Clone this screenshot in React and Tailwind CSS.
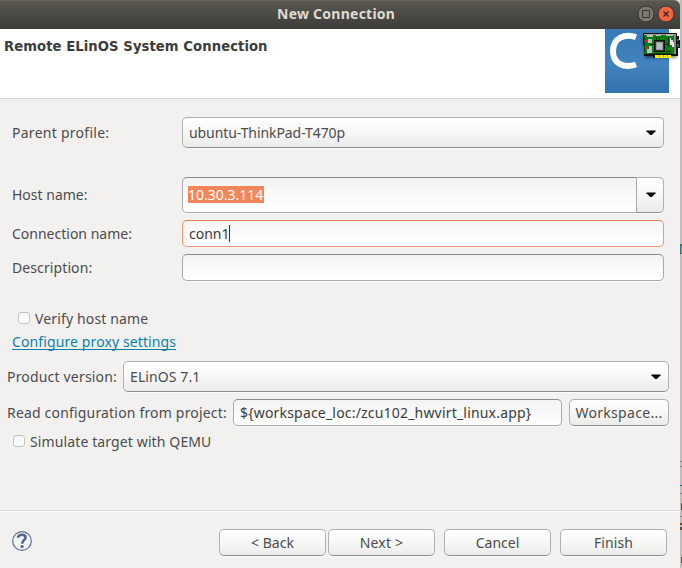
import React from "react";

const raised =
  "rounded-[5px] border border-[#b0b0ae] border-b-[#8f8f8d] bg-linear-to-b from-[#ffffff] via-[#f7f7f7] to-[#ebebea] shadow-[0_1px_0_#fafafa]";
const field =
  "rounded-[5px] border border-[#a9a9a7] border-t-[#8c8c8a] bg-linear-to-b from-[#f3f3f3] to-[#ffffff] shadow-[0_1px_0_#fafafa]";

function Label({ children, className = "" }) {
  return <span className={"block shrink-0 whitespace-pre " + className}>{children}</span>;
}

function Arrow() {
  return (
    <svg width="10" height="6" viewBox="0 0 10 6" className="shrink-0">
      <path d="M.500 .500h9v.8L5.800 5H4.200L.500 1.300z" fill="#000" />
    </svg>
  );
}

function Check() {
  return <span className="h-3 w-3 shrink-0 rounded-[3px] border border-[#c4c4c2] bg-linear-to-b from-[#f6f6f6] to-white" />;
}

function Button({ children, className, text = "" }) {
  return (
    <button className={"flex h-[27px] shrink-0 items-center justify-center " + raised + " " + className}>
      <Label className={text}>{children}</Label>
    </button>
  );
}

function Banner() {
  return (
    <svg width="76" height="64" viewBox="0 0 76 64" className="shrink-0">
      <defs>
        <linearGradient id="blue" x1="0" y1="0" x2="0" y2="1">
          <stop offset="0" stopColor="#3679b6" />
          <stop offset="0.55" stopColor="#4283bd" />
          <stop offset="1" stopColor="#3272af" />
        </linearGradient>
        <filter id="soft" x="-20%" y="-20%" width="140%" height="140%">
          <feGaussianBlur stdDeviation="1.500" />
        </filter>
      </defs>
      <rect width="64" height="64" fill="url(#blue)" />
      <path d="M31 8.300C20 4 8 9 8 22C8 35 19 39.500 31 35.500" fill="none" stroke="#fff" strokeWidth="6" />
      <path d="M38 8h34v21H40z" fill="#000" opacity="0.45" filter="url(#soft)" />
      <g shapeRendering="crispEdges">
        <path d="M38 4h34v3h2v4h1v8h-2v8h-7v2H48v-2h-9z" fill="#141414" />
        <path d="M39 5h32v1H39z" fill="#a7aaa7" />
        <path d="M39 6h30v19H39z" fill="#0b7d16" />
        <path d="M42 6h6v2h-6zM51 6h5v1h-5zM61 6h7v1h-7z" fill="#b9bdb9" />
        <path d="M39 7h1v17h-1zM44 24h23v1H44z" fill="#054a0b" />
        <path d="M40 11h3v2h-3zM40 18h3v2h-3z" fill="#f21c1c" />
        <path d="M43 10h4v4h-4zM42 20h5v4h-5zM44 17h3v3h-3z" fill="#c0c0c0" />
        <path d="M45 15h4v1h-4zM60 15h3v1h-3zM54 8h1v4h-1zM51 8h1v3h-1zM63 8h1v10h-1zM61 22h5v1h-5z" fill="#043b09" />
        <path d="M49 11h11v12H49z" fill="#111" />
        <path d="M50 12h9v10h-9z" fill="#333" />
        <path d="M51 13h7v8h-7z" fill="#9a9a9a" />
        <path d="M52 14h5v6h-5z" fill="#bdbdbd" />
        <path d="M65 9h1v2h2v2h1v5h-2v-2h-2z" fill="#e4e4e4" />
        <path d="M69 6h2v19h-2z" fill="#858585" />
        <path d="M72 10h2v2h-2zM72 15h2v3h-2z" fill="#555" />
        <path d="M50 26h16v3H50z" fill="#f2e916" />
        <path d="M54 26h1v2h-1zM58 26h1v2h-1zM62 26h1v2h-1z" fill="#b3aa17" />
      </g>
    </svg>
  );
}

function TitleBar() {
  return (
    <header className="flex h-[29px] w-[680px] shrink-0 items-center rounded-tr-[6px] border-t border-[#66645a] bg-linear-to-b from-[#595750] to-[#3d3c38] pr-[5px]">
      <Label className="-mt-[2px] ml-[277px] grow text-[14px] font-bold tracking-[0.25px] text-[#dfdbd2]">New Connection</Label>
      <svg width="38" height="18" viewBox="0 0 38 18" className="-mt-[3px]">
        <circle cx="9" cy="9" r="8" fill="#7b7970" stroke="#35342f" />
        <rect x="5.500" y="5.500" width="7" height="7" fill="none" stroke="#35342f" />
        <circle cx="29" cy="9" r="8" fill="#ee6540" stroke="#35342f" />
        <path d="M26.500 6.500l5 5m0-5l-5 5" stroke="#3b251c" strokeWidth="1.300" />
      </svg>
    </header>
  );
}

// Sliver of the window behind the dialog, visible past its right edge.
function BackgroundSliver() {
  return (
    <svg width="2" height="568" viewBox="0 0 2 568" className="shrink-0" shapeRendering="crispEdges">
      <path d="M0 0h2v568H0z" fill="#bdbdbb" />
      <path d="M0 461h2v1H0zM0 466h2v1H0zM0 493h2v1H0zM0 516h2v1H0z" fill="#858583" />
      <path d="M0 244h2v10H0z" fill="#376d6d" />
      <path d="M1 246h1v7h-1z" fill="#55b3df" />
      <path d="M0 485h2v1H0z" fill="#1c62ad" />
      <path d="M1 503h1v7h-1zM0 523h2v2H0zM0 527h2v3H0zM1 557h1v6h-1z" fill="#6f4a2c" />
    </svg>
  );
}

export default function App() {
  return (
    <div className="flex h-[568px] w-[682px] overflow-hidden bg-[#b9b9b7] font-['Noto_Sans',sans-serif] text-[14px] leading-[20px] text-[#4c4c4c]">
      <div className="flex w-[680px] shrink-0 flex-col bg-[#f2f1f0]">
        <div className="bg-[#dededc]">
          <TitleBar />
        </div>
        <section className="flex h-[70px] shrink-0 items-start border-b border-[#d9d8d6] bg-white">
          <Label className="ml-1 mt-[7px] w-[601px] font-['DejaVu_Sans_Condensed','DejaVu_Sans',sans-serif] text-[14.67px] font-bold tracking-[0.07px] text-[#3c3c3c] [font-stretch:condensed]">
            Remote ELinOS System Connection
          </Label>
          <Banner />
        </section>
        <main className="flex flex-col">
          <div className="mt-[18px] flex h-[31px] items-center pl-3">
            <Label className="w-[170px] tracking-[0.27px]">Parent profile:</Label>
            <div className={"flex h-[31px] w-[482px] items-center justify-between pl-1.5 pr-[7px] " + raised}>
              <Label className="tracking-[-0.08px]">ubuntu-ThinkPad-T470p</Label>
              <Arrow />
            </div>
          </div>
          <div className="mt-[29px] flex h-9 items-center pl-3">
            <Label className="w-[170px]">Host name:</Label>
            <div className={"flex h-9 w-[455px] items-center rounded-r-none! pl-[5px] " + field}>
              <Label className="-mt-px h-[17px] w-[76px] bg-[#f28559] leading-[17px] text-white">10.30.3.114</Label>
            </div>
            <div className={"flex h-9 w-[27px] items-center justify-center rounded-l-none! border-l-0! pl-0.5 " + raised}>
              <Arrow />
            </div>
          </div>
          <div className="mt-[7px] flex h-[27px] items-center pl-3">
            <Label className="w-[170px]">Connection name:</Label>
            <div className="flex h-[27px] w-[482px] items-center rounded-[5px] border border-[#ef9674] border-t-[#dd7c57] bg-linear-to-b from-[#f5f5f5] to-white pl-1.5">
              <Label className="w-10 text-[#3c3c3c]">conn1</Label>
              <span className="h-[17px] w-px bg-[#333]" />
            </div>
          </div>
          <div className="mt-[7px] flex h-[27px] items-center pl-3">
            <Label className="w-[170px] tracking-[0.1px]">Description:</Label>
            <div className={"h-[27px] w-[482px] " + field} />
          </div>
          <div className="mt-[27px] flex h-5 items-center gap-[5px] pl-[18px]">
            <Check />
            <Label className="mt-0.5 tracking-[0.14px]">Verify host name</Label>
          </div>
          <div className="mt-1 flex h-[18px] pl-3">
            <Label className="h-[18px] border-b border-[#0b7fa5] leading-[19px] tracking-[0.11px] text-[#0b82aa]">Configure proxy settings</Label>
          </div>
          <div className="mt-[11px] flex h-[31px] items-center pl-[7px]">
            <Label className="w-[116px] tracking-[0.18px]">Product version:</Label>
            <div className={"flex h-[31px] w-[546px] items-center justify-between pl-1.5 pr-[7px] " + raised}>
              <Label className="tracking-[0.1px]">ELinOS 7.1</Label>
              <Arrow />
            </div>
          </div>
          <div className="mt-[7px] flex h-[27px] items-center pl-[7px]">
            <Label className="w-[226px] tracking-[0.18px]">Read configuration from project:</Label>
            <div className={"mr-[7px] flex h-[27px] w-[329px] items-center pl-1.5 " + field}>
              <Label className="tracking-[0.19px] text-[#3c3c3c]">{"${workspace_loc:/zcu102_hwvirt_linux.app}"}</Label>
            </div>
            <Button className="w-[100px]" text="tracking-[0.3px]">Workspace...</Button>
          </div>
          <div className="mt-[5px] flex h-5 items-center gap-[5px] pl-[13px]">
            <Check />
            <Label className="mt-0.5 tracking-[0.12px]">Simulate target with QEMU</Label>
          </div>
        </main>
        <footer className="mt-auto flex h-[58px] shrink-0 items-start border-t border-[#d9d8d6] pl-3 pt-[18px] shadow-[inset_0_1px_0_#fafafa]">
          <svg width="20" height="20" viewBox="0 0 20 20" className="mr-[187px] mt-[2px]">
            <circle cx="10" cy="10" r="9.300" fill="#f3f4f6" stroke="#5d7090" strokeWidth="1.200" />
            <path d="M6 6.800C6 2.700 13.600 2.900 13.600 6.600C13.600 9.200 10.200 9 10.200 12.800" fill="none" stroke="#536687" strokeWidth="2.600" />
            <circle cx="10.100" cy="15.500" r="1.600" fill="#536687" />
          </svg>
          <Button className="mr-0.5 w-[107px]">{"< Back"}</Button>
          <Button className="mr-[9px] w-[107px]" text="tracking-[0.2px]">{"Next >"}</Button>
          <Button className="mr-[9px] w-[107px]">Cancel</Button>
          <Button className="w-[107px]" text="tracking-[0.1px]">Finish</Button>
        </footer>
      </div>
      <BackgroundSliver />
    </div>
  );
}
